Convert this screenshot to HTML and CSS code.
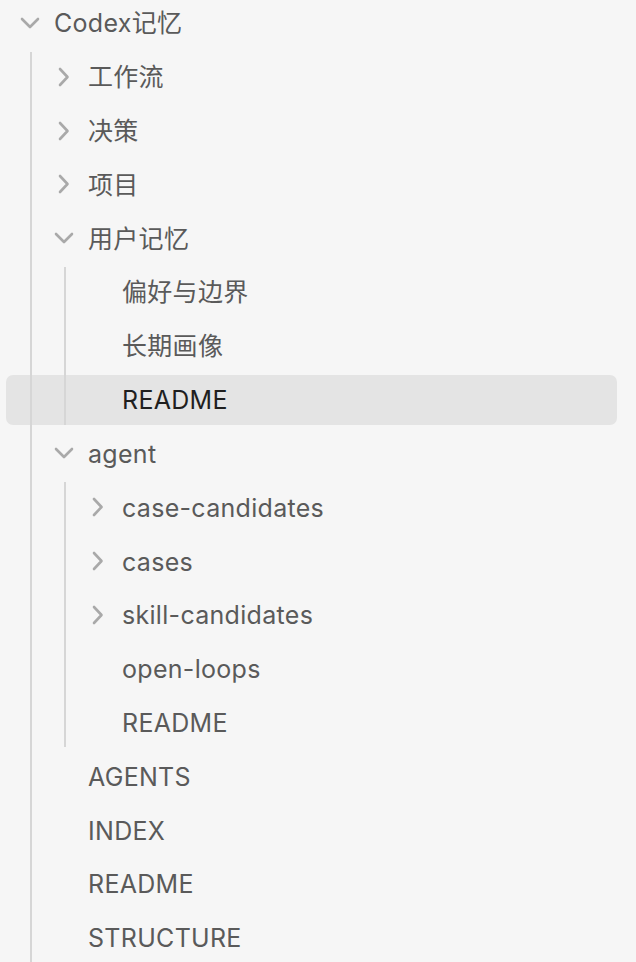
FILE: index.html
```html
<!DOCTYPE html>
<html lang="zh">
<head>
<meta charset="utf-8">
<title>Codex记忆</title>
<link rel="stylesheet" href="styles.css">
</head>
<body>
<svg width="0" height="0" class="defs" aria-hidden="true">
  <defs>
    <symbol id="down" viewBox="0 0 32 20"><path d="M8 6 L16 14 L24 6" fill="none" stroke="currentColor" stroke-width="2.6" stroke-linecap="round" stroke-linejoin="round"/></symbol>
    <symbol id="right" viewBox="0 0 32 20"><path d="M12 2 L19.5 10 L12 18" fill="none" stroke="currentColor" stroke-width="2.6" stroke-linecap="round" stroke-linejoin="round"/></symbol>
  </defs>
</svg>
<nav class="tree">
  <div class="row l0"><svg class="chev"><use href="#down"/></svg><span class="label">Codex记忆</span></div>
  <div class="children g0">
    <div class="row l1"><svg class="chev"><use href="#right"/></svg><span class="label">工作流</span></div>
    <div class="row l1"><svg class="chev"><use href="#right"/></svg><span class="label">决策</span></div>
    <div class="row l1"><svg class="chev"><use href="#right"/></svg><span class="label">项目</span></div>
    <div class="row l1"><svg class="chev"><use href="#down"/></svg><span class="label">用户记忆</span></div>
    <div class="children g1">
      <div class="row l2"><span class="chev"></span><span class="label">偏好与边界</span></div>
      <div class="row l2"><span class="chev"></span><span class="label">长期画像</span></div>
      <div class="row l2 selected"><span class="chev"></span><span class="label">README</span></div>
    </div>
    <div class="row l1"><svg class="chev"><use href="#down"/></svg><span class="label">agent</span></div>
    <div class="children g1">
      <div class="row l2"><svg class="chev"><use href="#right"/></svg><span class="label">case-candidates</span></div>
      <div class="row l2"><svg class="chev"><use href="#right"/></svg><span class="label">cases</span></div>
      <div class="row l2"><svg class="chev"><use href="#right"/></svg><span class="label">skill-candidates</span></div>
      <div class="row l2"><span class="chev"></span><span class="label">open-loops</span></div>
      <div class="row l2"><span class="chev"></span><span class="label">README</span></div>
    </div>
    <div class="row l1"><span class="chev"></span><span class="label">AGENTS</span></div>
    <div class="row l1"><span class="chev"></span><span class="label">INDEX</span></div>
    <div class="row l1"><span class="chev"></span><span class="label">README</span></div>
    <div class="row l1"><span class="chev"></span><span class="label">STRUCTURE</span></div>
  </div>
</nav>
</body>
</html>
```

FILE: styles.css
```css
html, body {
  margin: 0;
  padding: 0;
  background: #f6f6f6;
  height: 100%;
  overflow: hidden;
}

.defs {
  position: absolute;
  width: 0;
  height: 0;
}

.tree {
  display: flex;
  flex-direction: column;
  margin-top: -4px;
  font-family: Inter, "Noto Sans CJK SC", sans-serif;
  font-size: 25px;
  letter-spacing: 0.3px;
  color: #5a5a5a;
}

.children {
  position: relative;
  display: flex;
  flex-direction: column;
}

.children::before {
  content: "";
  position: absolute;
  top: 2px;
  bottom: 2px;
  width: 2px;
  background: #d6d6d6;
  z-index: 1;
}

.g0::before { left: 30px; bottom: -40px; }
.g1::before { left: 64px; }

.row {
  display: flex;
  align-items: center;
  height: 49.82px;
  margin: 2px 19px 2px 6px;
  border-radius: 7px;
  box-sizing: border-box;
}

.l0 { padding-left: 8px; }
.l1 { padding-left: 42px; }
.l2 { padding-left: 76px; }

.chev {
  flex: none;
  width: 32px;
  height: 20px;
  color: #a9a9a9;
}

.label {
  margin-left: 8px;
  padding-top: 2px;
  white-space: nowrap;
  line-height: 1;
}

.selected {
  background: #e4e4e4;
  color: #1f1f1f;
}
```
